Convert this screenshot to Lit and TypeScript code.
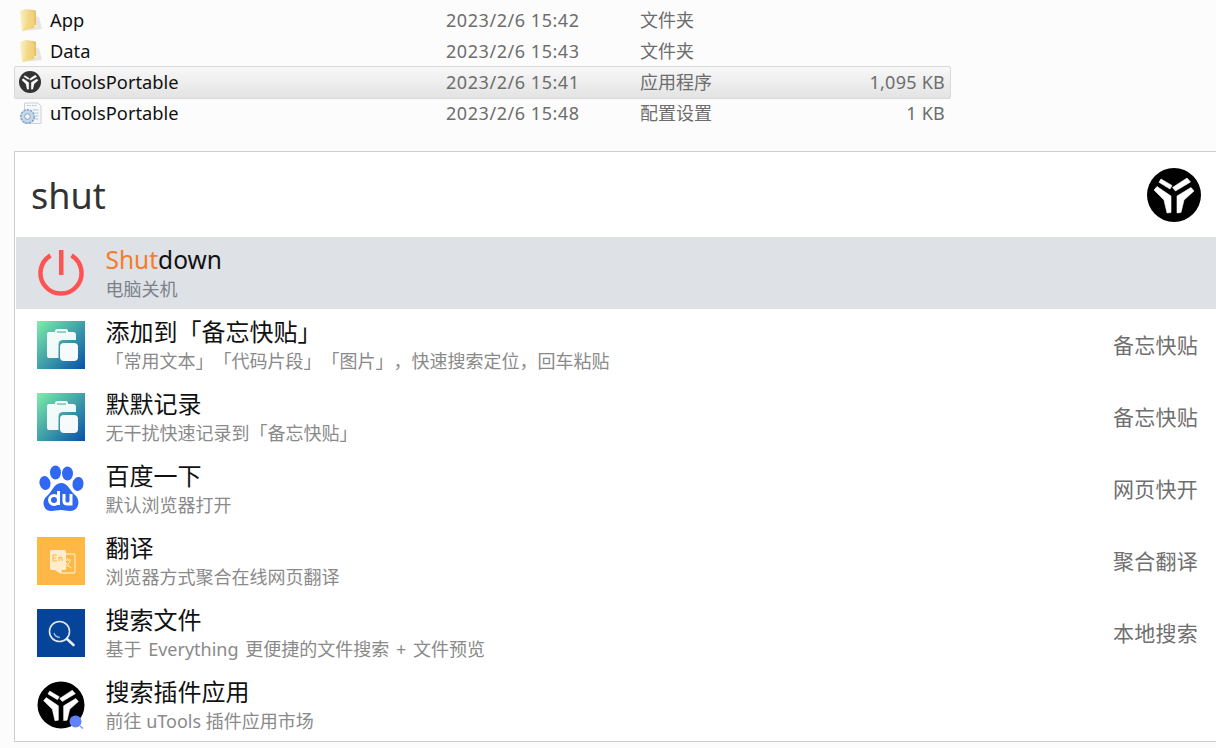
import { LitElement, html, css, svg } from 'lit';
import { customElement } from 'lit/decorators.js';

const files = [
  { name: 'App', date: '2023/2/6 15:42', type: '文件夹', size: '', icon: 'folder' },
  { name: 'Data', date: '2023/2/6 15:43', type: '文件夹', size: '', icon: 'folder' },
  { name: 'uToolsPortable', date: '2023/2/6 15:41', type: '应用程序', size: '1,095 KB', icon: 'logo', selected: true },
  { name: 'uToolsPortable', date: '2023/2/6 15:48', type: '配置设置', size: '1 KB', icon: 'config' },
];

const results = [
  { title: '添加到「备忘快贴」', desc: '「常用文本」「代码片段」「图片」，快速搜索定位，回车粘贴', tag: '备忘快贴', icon: 'clip', id: 'a' },
  { title: '默默记录', desc: '无干扰快速记录到「备忘快贴」', tag: '备忘快贴', icon: 'clip', id: 'b' },
  { title: '百度一下', desc: '默认浏览器打开', tag: '网页快开', icon: 'baidu' },
  { title: '翻译', desc: '浏览器方式聚合在线网页翻译', tag: '聚合翻译', icon: 'translate' },
  { title: '搜索文件', desc: html`<span class="wide">基于 Everything 更便捷的文件搜索 + 文件预览</span>`, tag: '本地搜索', icon: 'search' },
  { title: '搜索插件应用', desc: '前往 uTools 插件应用市场', tag: '', icon: 'market' },
];

// black disc with the three part Y mark, drawn in a -27..27 box
const logoMark = (fill = '#000') => svg`
  <circle cx="0" cy="0" r="27" fill=${fill}></circle>
  <g fill="#fff" stroke="#fff" stroke-width=".6" stroke-linejoin="round">
    <path d="M-13 -16 L-2 -9.5 L-4 -6 L-15 -12.7 Z"></path>
    <path d="M13 -17 L16.5 -13 L1.5 -4 L-1.5 -7.5 Z"></path>
    <path d="M-20 -5 L-17 -8.5 L-3 1 L-3 17.5 L-7 18 L-10 5 Z"></path>
    <path d="M20 -4 L17 -7.5 L3 1 L3 18 L7 17.5 L10 5 Z"></path>
  </g>`;

const icons: Record<string, (id?: string) => unknown> = {
  folder: () => html`<svg width="24" height="24" viewBox="0 0 24 24">
    <defs>
      <linearGradient id="fold" x1="0" y1="0" x2="1" y2="0">
        <stop offset="0" stop-color="#fdf2bd"></stop><stop offset="1" stop-color="#e3c067"></stop>
      </linearGradient>
      <linearGradient id="leaf" x1="0" y1="0" x2="1" y2="0">
        <stop offset="0" stop-color="#f6dc8c"></stop><stop offset="1" stop-color="#f1d277"></stop>
      </linearGradient>
    </defs>
    <path d="M15 8 L20 9 L23 21 L6 23 L15 19 Z" fill="#cfcbbb" opacity=".45"></path>
    <path d="M1 3 L7 1 L17 2.5 L17 19 L3 23.5 Z" fill="url(#fold)"></path>
    <path d="M10 4 L15 4.5 L15 18 L4 23 L7 17 Z" fill="url(#leaf)"></path>
    <rect x="15" y="17" width="2.5" height="2.5" fill="#fff4c4" opacity=".8"></rect>
  </svg>`,
  logo: () => html`<svg width="22" height="22" viewBox="-27 -27 54 54">${logoMark('#333')}</svg>`,
  config: () => html`<svg width="24" height="24" viewBox="0 0 24 24">
    <path d="M5.5 2 H19 L22 5 V22.5 H5.5 Z" fill="#f5f8fb" stroke="#c9d2db"></path>
    <path d="M8 4.5H17" stroke="#b4bec8" stroke-dasharray="1.5 1"></path>
    <path d="M14 9H19.5M15.5 12H19.5M16 15H19.5M15 18H19.5" stroke="#b5c3d2"></path>
    <circle cx="8.5" cy="15.5" r="6.7" fill="#c6d8eb" stroke="#87a3c2" stroke-dasharray="2.4 1" stroke-width="1.6"></circle>
    <circle cx="8.5" cy="15.5" r="2.8" fill="#f4f8fc" stroke="#86a2c0"></circle>
  </svg>`,
  power: () => html`<svg width="48" height="48" viewBox="0 0 48 48">
    <path d="M13.5 6.5 A 20.5 20.5 0 1 0 34.5 6.5" fill="none" stroke="#ff5252" stroke-width="4.5"></path>
    <rect x="22" y="1" width="4.5" height="25" fill="#ff5252"></rect>
  </svg>`,
  clip: (id) => html`<svg width="48" height="48" viewBox="0 0 48 48">
    <defs><linearGradient id="clip-${id}" x1="0" y1="0" x2="1" y2="1">
      <stop offset="0" stop-color="#7cefa8"></stop><stop offset="1" stop-color="#0650aa"></stop>
    </linearGradient></defs>
    <rect width="48" height="48" fill="url(#clip-${id})"></rect>
    <path d="M10 13 Q10 11 12 11 H18 V10 Q18 8 20 8 H29 Q31 8 31 10 V11 H36 Q39 11 39 14 V19 H26 Q22 19 21.5 23 V37 H12 Q10 37 10 35 Z" fill="#fff" opacity=".93"></path>
    <rect x="20" y="10" width="9" height="2" fill="#8fd6c0"></rect>
    <rect x="23" y="22" width="18" height="18" rx="4" fill="#fff" opacity=".96"></rect>
  </svg>`,
  baidu: () => html`<svg width="48" height="48" viewBox="0 0 48 48" fill="#3068f2">
    <ellipse cx="8" cy="18" rx="5.5" ry="7" transform="rotate(-14 8 18)"></ellipse>
    <ellipse cx="18.5" cy="7.5" rx="5.5" ry="7"></ellipse>
    <ellipse cx="30.5" cy="8.5" rx="5.5" ry="7"></ellipse>
    <ellipse cx="41" cy="19" rx="5.5" ry="7" transform="rotate(10 41 19)"></ellipse>
    <path d="M24 18 C31 18 33 26 38 30 C44 35 42 46 33 46 C29 46 27 45 24 45 C20 45 18 46 14 46 C6 46 4 36 10 31 C15 27 17 18 24 18 Z"></path>
    <g fill="none" stroke="#fff" stroke-width="3">
      <circle cx="17" cy="35" r="4.5"></circle>
      <path d="M21.5 26 V40"></path>
      <path d="M27 29 V36 Q27 39 30.5 39 Q34 39 34 36 V29 M34 29 V40.5"></path>
    </g>
  </svg>`,
  translate: () => html`<svg width="48" height="48" viewBox="0 0 48 48">
    <rect width="48" height="48" fill="#ffb845"></rect>
    <rect x="24" y="17" width="14" height="19" rx="1.5" fill="none" stroke="#ffe4b5" stroke-width="1.4"></rect>
    <rect x="13" y="13" width="16" height="20" rx="1.5" fill="#ffedcc"></rect>
    <path d="M18 33 L24 33 L24 37 Z" fill="#ffedcc"></path>
    <path d="M16 18H20M16 18V24H20M16 21H19.5M22 24V20M22 21Q25 19.5 25 21.5V24" stroke="#ffb845" stroke-width="1.1" fill="none"></path>
    <path d="M30.5 21V22.5M27 23H34M28 24Q30.5 30 34.5 31M33 24Q30.5 30 27 31" stroke="#ffedcc" stroke-width="1" fill="none"></path>
  </svg>`,
  search: () => html`<svg width="48" height="48" viewBox="0 0 48 48">
    <rect width="48" height="48" fill="#064499"></rect>
    <circle cx="22.5" cy="22.5" r="10" fill="none" stroke="#dfe8f3" stroke-width="1.6"></circle>
    <path d="M17 24 Q18 28 23 28.5" fill="none" stroke="#a9c0dc" stroke-width="1.2"></path>
    <path d="M30 30 L36.5 36" stroke="#e8eef6" stroke-width="2.6" stroke-linecap="round"></path>
  </svg>`,
  market: () => html`<svg width="48" height="48" viewBox="-24 -24 48 48">
    <g transform="scale(.87)">${logoMark()}</g>
    <circle cx="14.5" cy="16.5" r="6" fill="#5f82fb"></circle>
    <path d="M19 21 L22 23.5" stroke="#7f9cfb" stroke-width="1.6"></path>
  </svg>`,
};

@customElement('app-root')
export class AppRoot extends LitElement {
  static styles = css`
    :host {
      display: block;
      width: 1216px;
      height: 748px;
      overflow: hidden;
      box-sizing: border-box;
      background: #fcfcfc;
      font-family: "Noto Sans", "Noto Sans CJK SC", sans-serif;
      text-spacing-trim: space-all;
      text-autospace: no-autospace;
    }
    .files {
      padding: 4px 265px 0 14px;
      height: 151px;
      box-sizing: border-box;
    }
    .file {
      display: grid;
      grid-template-columns: 35px 396px 194px 1fr;
      align-items: center;
      height: 31px;
      padding: 0 5px 0 0;
      font-size: 18px;
      color: #6d6d6d;
      box-sizing: border-box;
      border: 1px solid transparent;
      border-radius: 2px;
    }
    .file.selected {
      height: 33px;
      margin-bottom: -2px;
      padding-bottom: 2px;
      border-color: #d9d9d9;
      background: linear-gradient(#f8f8f8, #e3e3e3);
    }
    .file-icon {
      display: flex;
      padding-left: 4px;
    }
    .file-name {
      color: #111;
      font-size: 18.3px;
    }
    .file-date {
      letter-spacing: 0.55px;
    }
    .file-meta {
      display: flex;
      justify-content: space-between;
    }
    .file-type {
      margin-top: -2px;
    }
    .file-size {
      letter-spacing: 0.25px;
    }
    .panel {
      height: 591px;
      margin-left: 14px;
      padding-left: 1px;
      box-sizing: border-box;
      background: #fff;
      border: 1px solid #cfcfcf;
      border-right: 0;
    }
    .header {
      display: flex;
      align-items: center;
      justify-content: space-between;
      height: 85px;
      padding: 0 15px;
      font-size: 36px;
      color: #333;
    }
    .query {
      padding-top: 2px;
    }
    .row {
      display: flex;
      align-items: center;
      height: 72px;
      padding: 0 18px 0 21px;
      box-sizing: border-box;
    }
    .row.active {
      background: #dee1e6;
    }
    .row-icon {
      display: flex;
      width: 48px;
      height: 48px;
      flex: none;
    }
    .row-text {
      flex: 1;
      margin-left: 20.5px;
      padding-top: 3px;
      display: flex;
      flex-direction: column;
    }
    .title {
      font-size: 24px;
      line-height: 30px;
      color: #111;
      margin-top: -4px;
    }
    .latin {
      font-size: 24.5px;
    }
    .hit {
      color: #f57c2b;
    }
    .desc {
      font-size: 18px;
      line-height: 24px;
      margin-top: 2px;
      color: #8a8a8a;
    }
    .wide {
      word-spacing: 2px;
    }
    .active .desc {
      color: #7a818a;
    }
    .tag {
      font-size: 21px;
      letter-spacing: 0.25px;
      color: #6f6f6f;
      margin: -2px 0 0 2px;
      width: 85px;
      white-space: nowrap;
    }
  `;

  render() {
    return html`
      <div class="files">
        ${files.map(
          (f) => html`
            <div class="file ${f.selected ? 'selected' : ''}">
              <span class="file-icon">${icons[f.icon]()}</span>
              <span class="file-name">${f.name}</span>
              <span class="file-date">${f.date}</span>
              <span class="file-meta">
                <span class="file-type">${f.type}</span><span class="file-size">${f.size}</span>
              </span>
            </div>
          `
        )}
      </div>
      <div class="panel">
        <div class="header">
          <span class="query">shut</span>
          <svg width="54" height="54" viewBox="-27 -27 54 54">${logoMark()}</svg>
        </div>
        <div class="row active">
          <span class="row-icon">${icons.power()}</span>
          <div class="row-text">
            <span class="title latin"><span class="hit">Shut</span>down</span>
            <span class="desc">电脑关机</span>
          </div>
        </div>
        ${results.map(
          (r) => html`
            <div class="row">
              <span class="row-icon">${icons[r.icon](r.id)}</span>
              <div class="row-text">
                <span class="title">${r.title}</span>
                <span class="desc">${r.desc}</span>
              </div>
              <span class="tag">${r.tag}</span>
            </div>
          `
        )}
      </div>
    `;
  }
}
